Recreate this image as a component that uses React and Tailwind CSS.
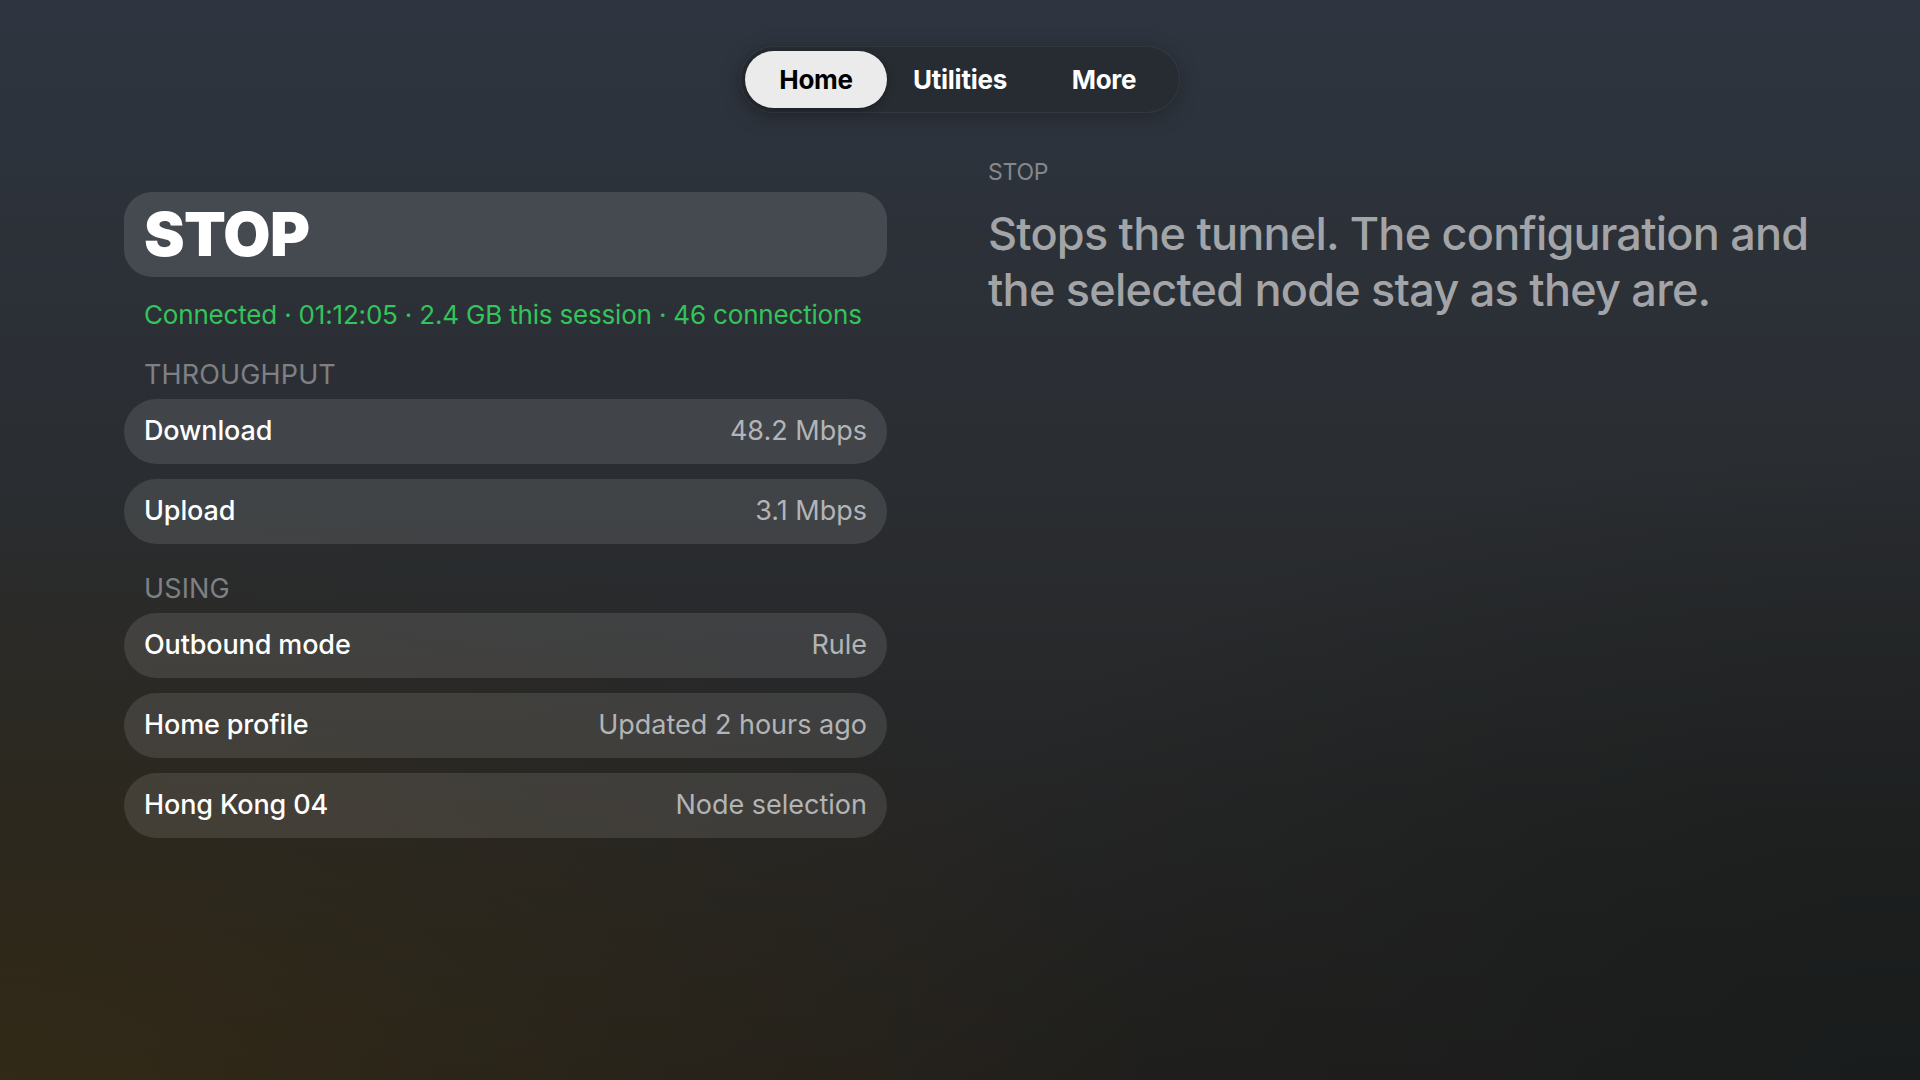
const font = { fontFamily: 'Inter, "Noto Sans", sans-serif' }

const tabs = ["Home", "Utilities", "More"]

const throughput = [
  { label: "Download", value: "48.2 Mbps" },
  { label: "Upload", value: "3.1 Mbps" },
]

const using = [
  { label: "Outbound mode", value: "Rule" },
  { label: "Home profile", value: "Updated 2 hours ago" },
  { label: "Hong Kong 04", value: "Node selection" },
]

function Row({ label, value }) {
  return (
    <div className="flex h-[65px] items-center justify-between rounded-full bg-white/[0.11] px-5">
      <span className="text-[27px] font-medium tracking-[-0.005em] text-white">{label}</span>
      <span className="text-[27px] tracking-[0em] text-[#b3b4b6]">{value}</span>
    </div>
  )
}

function SectionLabel({ children }) {
  return (
    <div className="px-5 text-[27px] uppercase leading-[30px] tracking-[0.005em] text-[#7e8084]">
      {children}
    </div>
  )
}

export default function App() {
  return (
    <div
      className="relative min-h-screen w-full overflow-hidden bg-[radial-gradient(ellipse_60%_55%_at_0%_100%,rgba(54,44,22,0.8),transparent),radial-gradient(ellipse_55%_60%_at_100%_100%,rgba(24,28,28,0.9),transparent),linear-gradient(180deg,#2e3540_0%,#2a2d31_45%,#211f1c_100%)]"
      style={font}
    >
      <nav className="flex justify-center pt-[46px]">
        <div className="flex gap-[2px] rounded-full border border-white/[0.06] bg-[#262a30]/80 p-1 shadow-[0_4px_20px_rgba(0,0,0,0.25)]">
          {tabs.map((t, i) => (
            <div
              key={t}
              className={
                i === 0
                  ? "flex h-[57px] w-[142px] items-center justify-center rounded-full bg-[#ebebeb] text-[26px] font-bold tracking-[-0.01em] text-black shadow-[0_2px_8px_rgba(0,0,0,0.3)]"
                  : "flex h-[57px] w-[142px] items-center justify-center rounded-full text-[26px] font-bold tracking-[-0.01em] text-white"
              }
            >
              {t}
            </div>
          ))}
        </div>
      </nav>

      <main className="flex gap-[101px] pl-[124px] pt-[79px]">
        <section className="flex w-[763px] flex-col">
          <div className="flex h-[85px] items-center rounded-[28px] bg-white/[0.12] px-5">
            <span className="text-[61px] font-black leading-none tracking-[-0.01em] text-white">STOP</span>
          </div>

          <div className="mt-[23px] whitespace-nowrap px-5 text-[26px] leading-[30px] tracking-[-0.007em] text-[#33c45a]">
            Connected · 01:12:05 · 2.4 GB this session · 46 connections
          </div>

          <div className="mt-[30px]">
            <SectionLabel>Throughput</SectionLabel>
          </div>
          <div className="mt-[9px] flex flex-col gap-[15px]">
            {throughput.map((r) => (
              <Row key={r.label} {...r} />
            ))}
          </div>

          <div className="mt-[30px]">
            <SectionLabel>Using</SectionLabel>
          </div>
          <div className="mt-[9px] flex flex-col gap-[15px]">
            {using.map((r) => (
              <Row key={r.label} {...r} />
            ))}
          </div>
        </section>

        <aside className="flex w-[840px] flex-col">
          <div className="mt-[-34px] text-[23px] leading-[28px] tracking-[-0.01em] text-[#85878b]">STOP</div>
          <p className="mt-[20px] text-[45px] font-medium leading-[56px] tracking-[-0.017em] text-[#a3a4a7]">
            Stops the tunnel. The configuration and the selected node stay as they are.
          </p>
        </aside>
      </main>
    </div>
  )
}
